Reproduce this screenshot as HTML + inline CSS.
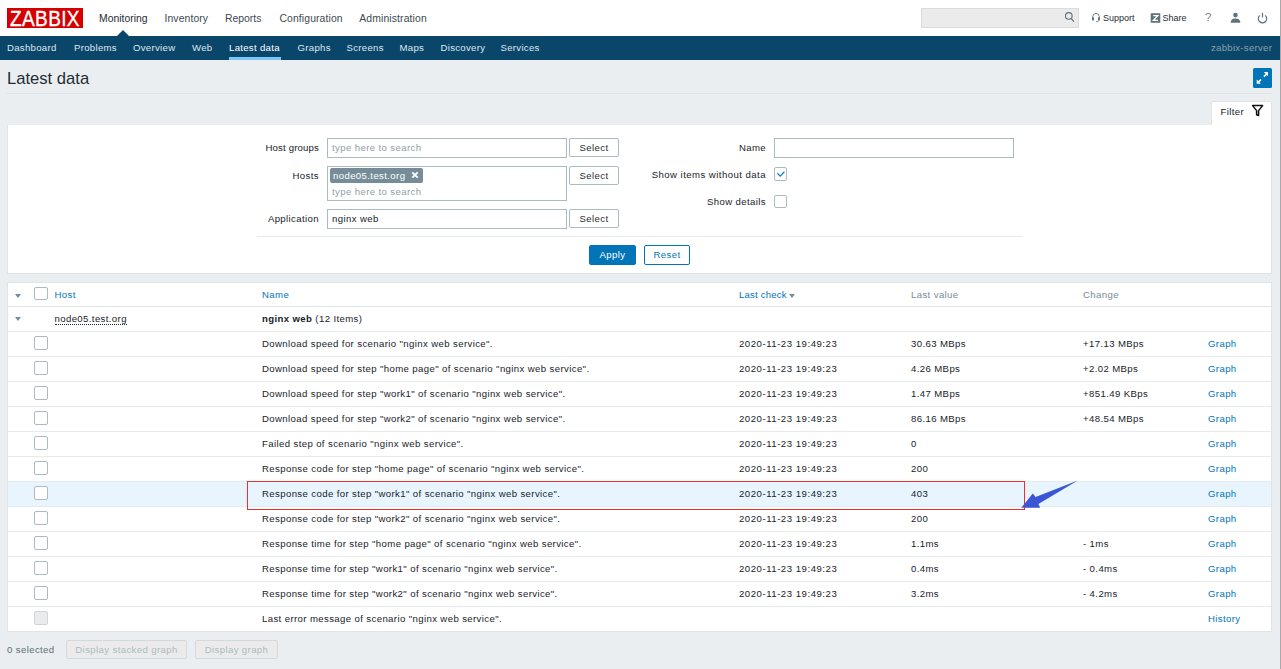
<!DOCTYPE html>
<html><head><meta charset="utf-8">
<style>
*{box-sizing:border-box;margin:0;padding:0}
html,body{width:1281px;height:669px;overflow:hidden}
body{position:relative;background:#ebeef0;font-family:"Liberation Sans",sans-serif;font-size:9.6px;letter-spacing:0.38px;color:#17232a}
.a{position:absolute;white-space:nowrap}
#hdr{position:absolute;left:0;top:0;width:1280px;height:36px;background:#fff}
#vline{position:absolute;left:1280px;top:0;width:1px;height:669px;background:#a9a9a9}
#logo{position:absolute;left:7px;top:8px;width:76px;height:20px;background:#d40000}
.tn{position:absolute;top:13px;line-height:12px;font-size:10.4px;letter-spacing:0;color:#3c4a52}
#tri{position:absolute;left:117px;top:30px;width:0;height:0;border-left:6px solid transparent;border-right:6px solid transparent;border-bottom:6px solid #0a466a}
#sub{position:absolute;left:0;top:36px;width:1280px;height:24px;background:#0a466a}
.sn{position:absolute;top:42px;line-height:12px;color:#dfe8ee;letter-spacing:0.3px}
#search{position:absolute;left:921px;top:8px;width:158px;height:20px;background:#ebebeb;border:1px solid #dcdcdc}
.hl{position:absolute;top:12px;line-height:12px;color:#1f2c33}
h1{position:absolute;left:7px;top:69px;letter-spacing:0;font-size:16.6px;font-weight:normal;line-height:20px;color:#1f2c33;white-space:nowrap}
#tline{position:absolute;left:7px;top:93px;width:1265px;height:1px;background:#dde2e5}
#fs{position:absolute;left:1253px;top:68px;width:19px;height:20px;background:#0275b8;border-radius:1.5px}
#ftab{position:absolute;left:1211px;top:101px;width:61px;height:25px;background:#fff;border:1px solid #dfe4e7;border-bottom:none;border-radius:2px 2px 0 0}
#fpanel{position:absolute;left:7px;top:125px;width:1265px;height:149px;background:#fff;border:1px solid #dfe4e7;border-top:none}
.lbl{position:absolute;line-height:12px;text-align:right}
.inp{position:absolute;background:#fff;border:1px solid #acbbc2}
.ph{position:absolute;color:#8f9fa8;line-height:12px}
.btn{position:absolute;background:#fff;border:1px solid #acbbc2;border-radius:2px;text-align:center;color:#1f2c33}
#tbl{position:absolute;left:7px;top:282px;width:1265px;height:350px;background:#fff;border:1px solid #dfe4e7}
.row{position:absolute;left:8px;width:1263px;height:1px;background:#e6eaed}
.cb{position:absolute;left:34px;width:14px;height:14px;border:1px solid #acbbc2;border-radius:2px;background:#fff}
.th{position:absolute;top:289px;line-height:12px;color:#768d99}
.tha{color:#0275b8}
.td{position:absolute;line-height:12px}
.lnk{color:#0275b8}
</style></head><body>
<div id="hdr"></div>
<div id="vline"></div>
<div id="logo"><svg width="76" height="20" viewBox="0 0 76 20"><text x="3.1" y="17.6" font-family="Liberation Sans" font-size="20.6" fill="#fff" stroke="#fff" stroke-width="0.35" textLength="69.8" lengthAdjust="spacingAndGlyphs" transform="translate(0,-0.9) scale(1,1.06)">ZABBIX</text></svg></div>
<div class="tn" style="left:99px;color:#1f2c33">Monitoring</div>
<div class="tn" style="left:164.5px;letter-spacing:0.1px">Inventory</div>
<div class="tn" style="left:225px">Reports</div>
<div class="tn" style="left:279.4px;letter-spacing:0.12px">Configuration</div>
<div class="tn" style="left:359.2px;letter-spacing:0.13px">Administration</div>
<div id="tri"></div>
<div id="sub"></div>
<div class="sn" style="left:7px">Dashboard</div>
<div class="sn" style="left:74px">Problems</div>
<div class="sn" style="left:133px">Overview</div>
<div class="sn" style="left:192px">Web</div>
<div class="sn" style="left:229px;color:#fff">Latest data</div>
<div style="position:absolute;left:229px;top:57px;width:52px;height:3px;background:#7ec8f7"></div>
<div class="sn" style="left:297.5px">Graphs</div>
<div class="sn" style="left:346.5px">Screens</div>
<div class="sn" style="left:399.5px">Maps</div>
<div class="sn" style="left:440.5px">Discovery</div>
<div class="sn" style="left:500.5px">Services</div>
<div class="sn" style="left:1211px;color:#8aa0ab;letter-spacing:0.27px">zabbix-server</div>

<div id="search"></div>
<svg class="a" style="left:1060px;top:10px" width="18" height="16" viewBox="0 0 18 16"><circle cx="8.8" cy="5.9" r="3.3" fill="none" stroke="#5f717b" stroke-width="1.1"/><line x1="11.2" y1="8.3" x2="13.9" y2="11.6" stroke="#5f717b" stroke-width="1.25"/></svg>
<svg class="a" style="left:1090px;top:11px" width="12" height="12" viewBox="0 0 12 12"><path d="M2.7 7 V5.8 A3.3 3.3 0 0 1 9.3 5.8 V7" fill="none" stroke="#5e737e" stroke-width="0.9"/><rect x="2" y="6.2" width="2" height="3.4" rx="0.9" fill="#5e737e"/><rect x="8" y="6.2" width="2" height="3.4" rx="0.9" fill="#5e737e"/><path d="M8.8 9.6 Q8.4 10.7 6.2 10.7" fill="none" stroke="#5e737e" stroke-width="0.9"/></svg>
<svg class="a" style="left:1150px;top:13px" width="11" height="10" viewBox="0 0 11 10"><rect x="0.7" y="0.2" width="9.6" height="9.6" rx="0.5" fill="#5e737e"/><path d="M3.2 2.6 H7.8 L3.4 7.4 H8" fill="none" stroke="#fff" stroke-width="1.4"/></svg>
<div class="a" style="left:1205px;top:11px;font-size:11.5px;line-height:12px;color:#6d818b;letter-spacing:0">?</div>
<svg class="a" style="left:1229px;top:12px" width="13" height="12" viewBox="0 0 13 12"><circle cx="6.5" cy="3.1" r="2.3" fill="#5e737e"/><path d="M1.6 10.8 Q1.8 6.4 6.5 6.4 Q11.2 6.4 11.4 10.8 Z" fill="#5e737e"/></svg>
<svg class="a" style="left:1256px;top:12px" width="13" height="12" viewBox="0 0 13 12"><path d="M3.8 3.4 A4.2 4.2 0 1 0 9.2 3.4" fill="none" stroke="#5e737e" stroke-width="1.2"/><line x1="6.5" y1="0.8" x2="6.5" y2="5.4" stroke="#5e737e" stroke-width="1.2"/></svg>

<div class="hl" style="left:1103px;font-size:9px;top:12px;letter-spacing:0">Support</div>
<div class="hl" style="left:1162.5px;font-size:9px;top:12px;letter-spacing:0">Share</div>

<h1>Latest data</h1>
<div id="tline"></div>
<div id="fs"></div>
<div id="ftab"></div>
<div class="a" style="left:1220.5px;top:106px;line-height:12px">Filter</div>
<div id="fpanel"></div>

<div id="tbl"></div>
<div class="row" style="top:331px"></div>
<div class="cb" style="top:336px"></div>
<div class="td" style="left:262px;top:338px">Download speed for scenario &quot;nginx web service&quot;.</div>
<div class="td" style="left:739px;top:338px;letter-spacing:0.52px">2020-11-23 19:49:23</div>
<div class="td" style="left:911px;top:338px">30.63 MBps</div>
<div class="td" style="left:1083px;top:338px">+17.13 MBps</div>
<div class="td lnk" style="left:1208px;top:338px">Graph</div>
<div class="row" style="top:356px"></div>
<div class="cb" style="top:361px"></div>
<div class="td" style="left:262px;top:363px">Download speed for step &quot;home page&quot; of scenario &quot;nginx web service&quot;.</div>
<div class="td" style="left:739px;top:363px;letter-spacing:0.52px">2020-11-23 19:49:23</div>
<div class="td" style="left:911px;top:363px">4.26 MBps</div>
<div class="td" style="left:1083px;top:363px">+2.02 MBps</div>
<div class="td lnk" style="left:1208px;top:363px">Graph</div>
<div class="row" style="top:381px"></div>
<div class="cb" style="top:386px"></div>
<div class="td" style="left:262px;top:388px">Download speed for step &quot;work1&quot; of scenario &quot;nginx web service&quot;.</div>
<div class="td" style="left:739px;top:388px;letter-spacing:0.52px">2020-11-23 19:49:23</div>
<div class="td" style="left:911px;top:388px">1.47 MBps</div>
<div class="td" style="left:1083px;top:388px">+851.49 KBps</div>
<div class="td lnk" style="left:1208px;top:388px">Graph</div>
<div class="row" style="top:406px"></div>
<div class="cb" style="top:411px"></div>
<div class="td" style="left:262px;top:413px">Download speed for step &quot;work2&quot; of scenario &quot;nginx web service&quot;.</div>
<div class="td" style="left:739px;top:413px;letter-spacing:0.52px">2020-11-23 19:49:23</div>
<div class="td" style="left:911px;top:413px">86.16 MBps</div>
<div class="td" style="left:1083px;top:413px">+48.54 MBps</div>
<div class="td lnk" style="left:1208px;top:413px">Graph</div>
<div class="row" style="top:431px"></div>
<div class="cb" style="top:436px"></div>
<div class="td" style="left:262px;top:438px">Failed step of scenario &quot;nginx web service&quot;.</div>
<div class="td" style="left:739px;top:438px;letter-spacing:0.52px">2020-11-23 19:49:23</div>
<div class="td" style="left:911px;top:438px">0</div>
<div class="td lnk" style="left:1208px;top:438px">Graph</div>
<div class="row" style="top:456px"></div>
<div class="cb" style="top:461px"></div>
<div class="td" style="left:262px;top:463px">Response code for step &quot;home page&quot; of scenario &quot;nginx web service&quot;.</div>
<div class="td" style="left:739px;top:463px;letter-spacing:0.52px">2020-11-23 19:49:23</div>
<div class="td" style="left:911px;top:463px">200</div>
<div class="td lnk" style="left:1208px;top:463px">Graph</div>
<div style="position:absolute;left:8px;top:482px;width:1263px;height:24px;background:#e8f5ff"></div>
<div class="row" style="top:481px"></div>
<div class="cb" style="top:486px"></div>
<div class="td" style="left:262px;top:488px">Response code for step &quot;work1&quot; of scenario &quot;nginx web service&quot;.</div>
<div class="td" style="left:739px;top:488px;letter-spacing:0.52px">2020-11-23 19:49:23</div>
<div class="td" style="left:911px;top:488px">403</div>
<div class="td lnk" style="left:1208px;top:488px">Graph</div>
<div class="row" style="top:506px"></div>
<div class="cb" style="top:511px"></div>
<div class="td" style="left:262px;top:513px">Response code for step &quot;work2&quot; of scenario &quot;nginx web service&quot;.</div>
<div class="td" style="left:739px;top:513px;letter-spacing:0.52px">2020-11-23 19:49:23</div>
<div class="td" style="left:911px;top:513px">200</div>
<div class="td lnk" style="left:1208px;top:513px">Graph</div>
<div class="row" style="top:531px"></div>
<div class="cb" style="top:536px"></div>
<div class="td" style="left:262px;top:538px">Response time for step &quot;home page&quot; of scenario &quot;nginx web service&quot;.</div>
<div class="td" style="left:739px;top:538px;letter-spacing:0.52px">2020-11-23 19:49:23</div>
<div class="td" style="left:911px;top:538px">1.1ms</div>
<div class="td" style="left:1083px;top:538px">- 1ms</div>
<div class="td lnk" style="left:1208px;top:538px">Graph</div>
<div class="row" style="top:556px"></div>
<div class="cb" style="top:561px"></div>
<div class="td" style="left:262px;top:563px">Response time for step &quot;work1&quot; of scenario &quot;nginx web service&quot;.</div>
<div class="td" style="left:739px;top:563px;letter-spacing:0.52px">2020-11-23 19:49:23</div>
<div class="td" style="left:911px;top:563px">0.4ms</div>
<div class="td" style="left:1083px;top:563px">- 0.4ms</div>
<div class="td lnk" style="left:1208px;top:563px">Graph</div>
<div class="row" style="top:581px"></div>
<div class="cb" style="top:586px"></div>
<div class="td" style="left:262px;top:588px">Response time for step &quot;work2&quot; of scenario &quot;nginx web service&quot;.</div>
<div class="td" style="left:739px;top:588px;letter-spacing:0.52px">2020-11-23 19:49:23</div>
<div class="td" style="left:911px;top:588px">3.2ms</div>
<div class="td" style="left:1083px;top:588px">- 4.2ms</div>
<div class="td lnk" style="left:1208px;top:588px">Graph</div>
<div class="row" style="top:606px"></div>
<div class="cb" style="top:611px;background:#ebebeb;border-color:#ccd5da"></div>
<div class="td" style="left:262px;top:613px">Last error message of scenario &quot;nginx web service&quot;.</div>
<div class="td lnk" style="left:1208px;top:613px">History</div>
<!-- filter form -->
<div class="lbl" style="left:200px;width:119px;top:142px;letter-spacing:0.17px">Host groups</div>
<div class="inp" style="left:327px;top:138px;width:240px;height:20px"></div>
<div class="ph" style="left:332px;top:142px">type here to search</div>
<div class="btn" style="left:569px;top:138px;width:50px;height:19px;line-height:17px">Select</div>

<div class="lbl" style="left:200px;width:119px;top:170px">Hosts</div>
<div class="inp" style="left:327px;top:166px;width:240px;height:35px"></div>
<div style="position:absolute;left:330px;top:168px;width:93px;height:15px;background:#768d99;border-radius:2px"></div>
<div class="a" style="left:333px;top:170px;line-height:12px;color:#fff">node05.test.org</div>
<svg class="a" style="left:411px;top:171px" width="8" height="8" viewBox="0 0 8 8"><path d="M1.3 1.3 L6.7 6.7 M6.7 1.3 L1.3 6.7" stroke="#fff" stroke-width="1.9"/></svg>
<div class="ph" style="left:332px;top:186px">type here to search</div>
<div class="btn" style="left:569px;top:166px;width:50px;height:19px;line-height:17px">Select</div>

<div class="lbl" style="left:200px;width:119px;top:213px">Application</div>
<div class="inp" style="left:327px;top:209px;width:240px;height:20px"></div>
<div class="a" style="left:332px;top:213px;line-height:12px">nginx web</div>
<div class="btn" style="left:569px;top:209px;width:50px;height:19px;line-height:17px">Select</div>

<div class="lbl" style="left:600px;width:166px;top:142px">Name</div>
<div class="inp" style="left:774px;top:138px;width:240px;height:20px"></div>
<div class="lbl" style="left:600px;width:166px;top:169px;letter-spacing:0.45px">Show items without data</div>
<div class="cb" style="left:774px;top:167px;width:13px;height:14px"></div>
<svg class="a" style="left:774px;top:167px" width="13" height="14"><path d="M3.3 6.3 L6.2 9.1 L10.4 4.7" fill="none" stroke="#1a7fc1" stroke-width="1.3"/></svg>
<div class="lbl" style="left:600px;width:166px;top:196px">Show details</div>
<div class="cb" style="left:774px;top:195px;width:13px;height:13px"></div>

<div style="position:absolute;left:257px;top:236px;width:765px;height:1px;background:#e5e9ec"></div>
<div class="btn" style="left:589px;top:245px;width:47px;height:20px;line-height:18px;background:#0275b8;border-color:#0275b8;color:#fff">Apply</div>
<div class="btn" style="left:644px;top:245px;width:46px;height:20px;line-height:18px;border-color:#0275b8;color:#0275b8">Reset</div>

<!-- table header -->
<div style="position:absolute;left:15px;top:294px;width:0;height:0;border-left:3px solid transparent;border-right:3px solid transparent;border-top:4px solid #768d99"></div>
<div class="cb" style="top:287px;height:13px"></div>
<div class="th tha" style="left:54.5px">Host</div>
<div class="th tha" style="left:262px">Name</div>
<div class="th tha" style="left:739px;letter-spacing:0.2px">Last check</div>
<div style="position:absolute;left:789px;top:294px;width:0;height:0;border-left:3px solid transparent;border-right:3px solid transparent;border-top:4px solid #768d99"></div>
<div class="th" style="left:911px">Last value</div>
<div class="th" style="left:1083px">Change</div>
<div class="row" style="top:306px;background:#dfe4e7"></div>
<!-- group row -->
<div style="position:absolute;left:15px;top:317px;width:0;height:0;border-left:3px solid transparent;border-right:3px solid transparent;border-top:4px solid #768d99"></div>
<div class="td" style="left:54.5px;top:313px">node05.test.org</div>
<div style="position:absolute;left:54.5px;top:324px;width:72px;height:0;border-bottom:1px dotted #1f2c33"></div>
<div class="td" style="left:262px;top:313px"><b>nginx web</b> (12 Items)</div>

<!-- footer -->
<div class="a" style="left:7px;top:644px;line-height:12px;color:#5b6e78">0 selected</div>
<div class="btn" style="left:66px;top:640px;width:121px;height:19px;line-height:17px;background:#ebebeb;border-color:#d4d9dc;color:#acbbc2">Display stacked graph</div>
<div class="btn" style="left:195px;top:640px;width:83px;height:19px;line-height:17px;background:#ebebeb;border-color:#d4d9dc;color:#acbbc2">Display graph</div>

<!-- annotation -->
<div style="position:absolute;left:247px;top:480.5px;width:778px;height:29px;border:1.3px solid #ef2f2f"></div>
<svg class="a" style="left:0;top:0" width="1281" height="669"><polygon points="1021.3,507.8 1032.8,493.4 1035.6,496.9 1077.8,480.5 1038.4,504 1040.2,507.8" fill="#3a56d4"/></svg>

<svg class="a" style="left:1253px;top:68px" width="19" height="20" viewBox="0 0 19 20"><path d="M10.9 8.7 L13.6 6" stroke="#fff" stroke-width="1.7"/><path d="M10.8 4.1 H15 V8.3 Z" fill="#fff"/><path d="M8 11.5 L5.3 14.2" stroke="#fff" stroke-width="1.7"/><path d="M3.7 11.6 V15.8 H7.9 Z" fill="#fff"/></svg>
<svg class="a" style="left:1251px;top:104px" width="13" height="13" viewBox="0 0 13 13"><path d="M1.6 1.6 H11.6 L7.6 6.6 V11.6 L5.6 10.8 V6.6 Z" fill="none" stroke="#111" stroke-width="1.5" stroke-linejoin="round"/></svg>
</body></html>
